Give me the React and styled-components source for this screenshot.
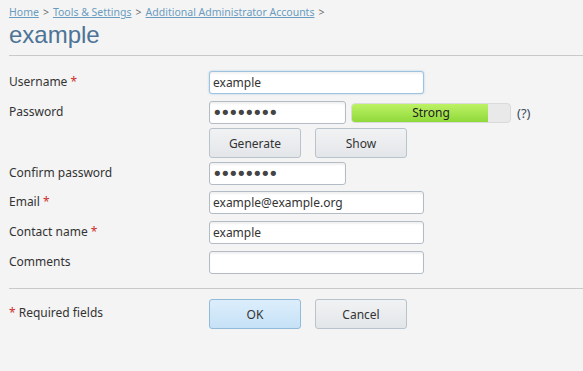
import React from "react";
import styled, { createGlobalStyle } from "styled-components";

const GlobalStyle = createGlobalStyle`
  html, body {
    margin: 0;
    padding: 0;
    background: #f4f4f4;
  }
  body {
    font-family: "Noto Sans", "DejaVu Sans", sans-serif;
    font-size: 12px;
    color: #333;
  }
`;

const Page = styled.div`
  padding-left: 9px;
  height: 371px;
  overflow: hidden;
`;

const Breadcrumb = styled.div`
  padding-top: 5px;
  font-size: 10.5px;
  line-height: 14px;
  color: #666;
`;

const Crumb = styled.a`
  color: #6a9cc0;
  text-decoration: underline;
  cursor: pointer;
`;

const Sep = styled.span`
  margin: 0 4px;
  color: #666;
`;

const Title = styled.h1`
  margin: 2px 0 0;
  font-family: "Liberation Sans", Arial, sans-serif;
  font-weight: normal;
  font-size: 24px;
  line-height: 28px;
  color: #4d7396;
`;

const Divider = styled.hr`
  margin: ${(p) => p.$top}px 0 0;
  border: 0;
  border-top: 1px solid #c9c9c9;
  height: 0;
`;

const Form = styled.form`
  margin-top: 15px;
`;

const Row = styled.div`
  display: grid;
  grid-template-columns: 200px 1fr;
  margin-top: ${(p) => p.$gap || 0}px;
`;

const Label = styled.label`
  padding-top: ${(p) => p.$pad ?? 3}px;
  line-height: 16px;
  color: #333;
`;

const Req = styled.span`
  color: #cc2f2a;
`;

const Field = styled.div`
  display: flex;
  align-items: center;
  gap: ${(p) => p.$gap || 0}px;
`;

const Input = styled.input`
  box-sizing: border-box;
  width: ${(p) => (p.$short ? 137 : 215)}px;
  height: 23px;
  margin: 0;
  padding: 0 3px;
  border: 1px solid ${(p) => (p.$focus ? "#9cc3e2" : "#b3bcc5")};
  border-radius: 3px;
  background: #fff;
  box-shadow: ${(p) =>
    p.$focus
      ? "0 0 2px rgba(120, 170, 215, 0.6), inset 0 2px 2px rgba(0,0,0,0.05)"
      : "inset 0 2px 2px rgba(0,0,0,0.06)"};
  font-family: "Noto Sans", "DejaVu Sans", sans-serif;
  font-size: 12px;
  color: #333;
  outline: none;
`;

const Dots = styled(Input)`
  padding-left: 2px;
  font-family: "DejaVu Sans", sans-serif;
  font-size: 18px;
  letter-spacing: -2.6px;
  color: #444;
`;

const Strength = styled.div`
  position: relative;
  box-sizing: border-box;
  width: 160px;
  height: 20px;
  margin-left: 5px;
  border: 1px solid #dadada;
  border-radius: 4px;
  background: #e9e9e9;
  overflow: hidden;
`;

const StrengthFill = styled.div`
  height: 100%;
  background: linear-gradient(#bdf265, #8fd93a);
`;

const StrengthText = styled.span`
  position: absolute;
  inset: 0;
  text-align: center;
  line-height: 18px;
  color: #222;
`;

const Help = styled.span`
  margin-left: 6px;
  font-size: 13px;
  color: #3c4b5c;
`;

const Button = styled.button`
  box-sizing: border-box;
  width: 92px;
  height: 30px;
  margin: 0;
  border: 1px solid ${(p) => (p.$primary ? "#92bad9" : "#b9c3cc")};
  border-radius: 3px;
  background: ${(p) =>
    p.$primary
      ? "linear-gradient(#dceefc, #c6e1f6)"
      : "linear-gradient(#f1f2f4, #e3e6e9)"};
  font-family: "Noto Sans", "DejaVu Sans", sans-serif;
  font-size: 12px;
  color: #333;
  cursor: pointer;
`;

const strength = 0.86;

export default function App() {
  return (
    <Page>
      <GlobalStyle />
      <Breadcrumb>
        <Crumb>Home</Crumb>
        <Sep>&gt;</Sep>
        <Crumb>Tools &amp; Settings</Crumb>
        <Sep>&gt;</Sep>
        <Crumb>Additional Administrator Accounts</Crumb>
        <Sep>&gt;</Sep>
      </Breadcrumb>
      <Title>example</Title>
      <Divider $top={6} />
      <Form onSubmit={(e) => e.preventDefault()}>
        <Row>
          <Label>
            Username <Req>*</Req>
          </Label>
          <Field>
            <Input $focus defaultValue="example" />
          </Field>
        </Row>
        <Row $gap={7}>
          <Label>Password</Label>
          <Field>
            <Dots $short type="password" defaultValue="abcdefgh" />
            <Strength>
              <StrengthFill style={{ width: `${strength * 100}%` }} />
              <StrengthText>Strong</StrengthText>
            </Strength>
            <Help>(?)</Help>
          </Field>
        </Row>
        <Row $gap={4}>
          <span />
          <Field $gap={14}>
            <Button type="button">Generate</Button>
            <Button type="button">Show</Button>
          </Field>
        </Row>
        <Row $gap={4}>
          <Label>Confirm password</Label>
          <Field>
            <Dots $short type="password" defaultValue="abcdefgh" />
          </Field>
        </Row>
        <Row $gap={6}>
          <Label>
            Email <Req>*</Req>
          </Label>
          <Field>
            <Input defaultValue="example@example.org" />
          </Field>
        </Row>
        <Row $gap={7}>
          <Label>
            Contact name <Req>*</Req>
          </Label>
          <Field>
            <Input defaultValue="example" />
          </Field>
        </Row>
        <Row $gap={7}>
          <Label>Comments</Label>
          <Field>
            <Input defaultValue="" />
          </Field>
        </Row>
        <Divider $top={14} />
        <Row $gap={10}>
          <Label $pad={6}>
            <Req>*</Req> Required fields
          </Label>
          <Field $gap={14}>
            <Button $primary type="submit">OK</Button>
            <Button type="button">Cancel</Button>
          </Field>
        </Row>
      </Form>
    </Page>
  );
}
